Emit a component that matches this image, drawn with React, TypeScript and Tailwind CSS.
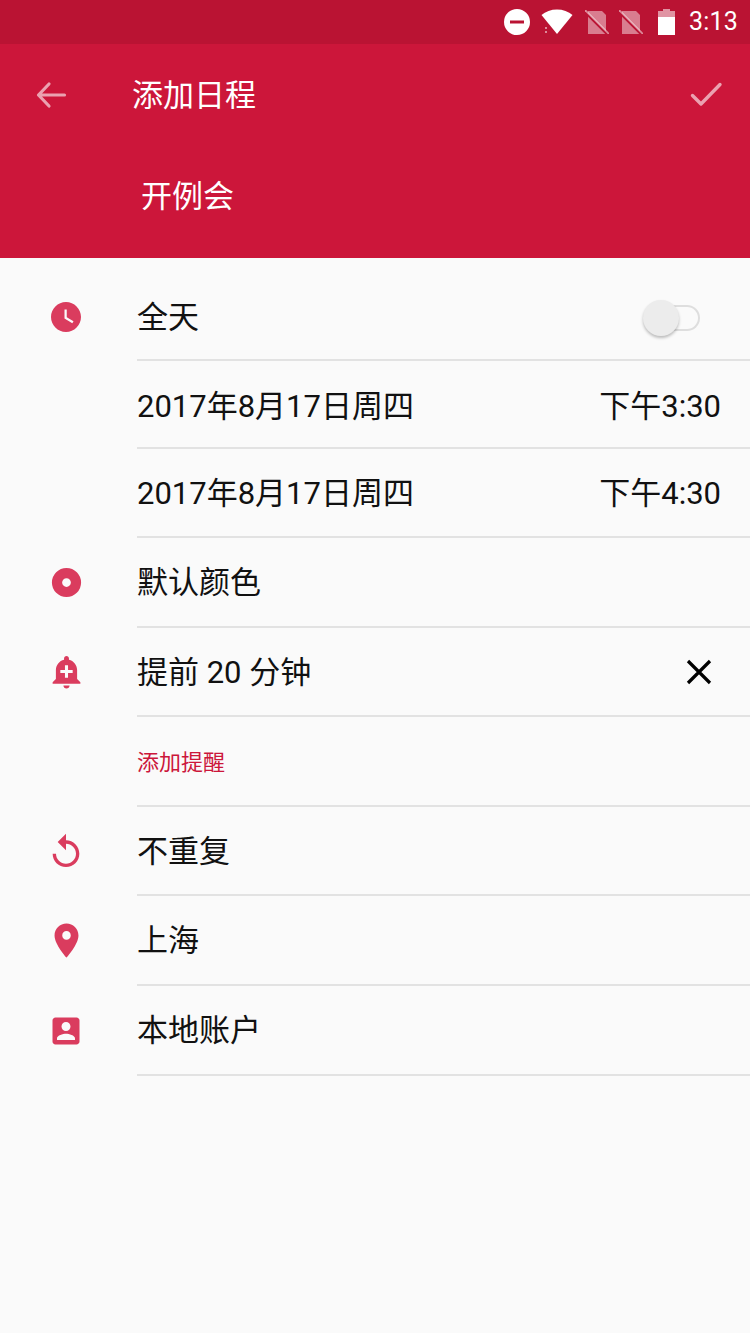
import React from "react";

const font = { fontFamily: '"Roboto","Noto Sans CJK SC",sans-serif' };

function Ic({ d, size = 36 }: { d: string; size?: number }) {
  return (
    <svg width={size} height={size} viewBox="0 0 24 24" fill="#da3c5e" fillRule="evenodd" className="shrink-0">
      <path d={d} />
    </svg>
  );
}

const CLOCK = "M12 2C6.5 2 2 6.5 2 12s4.5 10 10 10 10-4.5 10-10S17.5 2 12 2zm4.2 14.2L11 13V7h1.5v5.2l4.5 2.7-.8 1.3z";
const DOT = "M12 2a10 10 0 1 0 0 20 10 10 0 0 0 0-20zm0 7a3 3 0 1 1 0 6 3 3 0 0 1 0-6z";
const BELL = "M10.01 21.01c0 1.1.89 1.99 1.99 1.99s1.99-.89 1.99-1.99h-3.98zm8.87-4.19V11c0-3.25-2.25-5.97-5.29-6.69v-.72C13.59 2.71 12.88 2 12 2s-1.59.71-1.59 1.59v.72C7.37 5.03 5.12 7.75 5.12 11v5.82L3 18.94V20h18v-1.06l-2.12-2.12zM16 13.01h-3v3h-2v-3H8V11h3V8h2v3h3v2.01z";
const REPLAY = "M12 5V1L7 6l5 5V7c3.31 0 6 2.69 6 6s-2.69 6-6 6-6-2.69-6-6H4c0 4.42 3.58 8 8 8s8-3.58 8-8-3.58-8-8-8z";
const PIN = "M12 2C8.13 2 5 5.13 5 9c0 5.25 7 13 7 13s7-7.75 7-13c0-3.87-3.13-7-7-7zm0 9.5c-1.38 0-2.5-1.12-2.5-2.5s1.12-2.5 2.5-2.5 2.5 1.12 2.5 2.5-1.12 2.5-2.5 2.5z";
const ACCOUNT = "M3 5v14c0 1.1.89 2 2 2h14c1.1 0 2-.9 2-2V5c0-1.1-.9-2-2-2H5c-1.11 0-2 .9-2 2zm12 4c0 1.66-1.34 3-3 3s-3-1.34-3-3 1.34-3 3-3 3 1.34 3 3zm-9 8c0-2 4-3.1 6-3.1s6 1.1 6 3.1v1H6v-1z";

function Row({ icon, size, iconPad = "", textPad = "pt-[3px]", h, children }: { icon?: string; size?: number; iconPad?: string; textPad?: string; h: string; children: React.ReactNode }) {
  return (
    <div className={`flex ${h}`}>
      <div className={`w-[132px] mr-[5px] shrink-0 flex items-center justify-center ${iconPad}`}>{icon ? <Ic d={icon} size={size} /> : null}</div>
      <div className={`flex-1 flex items-center justify-between border-b-2 border-[#e2e2e2] text-[31px] text-[#111111] pr-[29px] ${textPad}`}>
        {children}
      </div>
    </div>
  );
}

function SimOff() {
  return (
    <svg width="24" height="24" viewBox="0 0 24 24">
      <path d="M3 1h14l4 4v19H3z" fill="#fff" fillOpacity="0.45" />
      <path d="M0 2l22 22" stroke="#ba1333" strokeWidth="2.500" />
      <path d="M0 0l24 24" stroke="#fff" strokeOpacity="0.5" strokeWidth="1.800" />
    </svg>
  );
}

export default function App() {
  return (
    <div className="w-[750px] h-[1333px] bg-[#fafafa] flex flex-col overflow-hidden" style={font}>
      <div className="h-[44px] bg-[#ba1333] flex items-center justify-end text-white">
        <svg width="26" height="26" viewBox="0 0 26 26" className="mr-[11px]">
          <path fill="#fff" fillRule="evenodd" d="M13 0a13 13 0 1 0 0 26 13 13 0 0 0 0-26zM6 11.500h14v3H6z" />
        </svg>
        <svg width="32" height="26" viewBox="0 0 32 26" className="mr-[12px]">
          <path fill="#fff" d="M16 25 0.500 6C4.500 2.500 10 0.500 16 0.500S27.500 2.500 31.500 6z" />
          <path fill="#fff" opacity="0.5" d="M4 18h2v2H4zM4 22h2v2H4z" />
        </svg>
        <div className="mr-[10px] flex"><SimOff /></div>
        <div className="mr-[15px] flex"><SimOff /></div>
        <svg width="17" height="26" viewBox="0 0 17 26" className="mr-[14px]">
          <path fill="#fff" opacity="0.55" d="M5 0h7v2h5v6H0V2h5z" />
          <path fill="#fff" d="M0 8h17v18H0z" />
        </svg>
        <span className="text-[25px] mr-[12px] tracking-[0.2px]">3:13</span>
      </div>
      <div className="h-[214px] bg-[#cc163a] text-white flex flex-col">
        <div className="h-[102px] flex items-center pl-[32px] pr-[22px]">
          <svg width="38" height="38" viewBox="0 0 38 38" fill="none" stroke="#fff" strokeOpacity="0.6" strokeWidth="3.200" strokeLinecap="round" strokeLinejoin="round">
            <path d="M6.500 19h26M17 8 6.500 19 17 30" />
          </svg>
          <span className="ml-[62px] pt-[2px] text-[31px] flex-1">添加日程</span>
          <svg width="40" height="40" viewBox="0 0 40 40" fill="none" stroke="#fff" strokeOpacity="0.6" strokeWidth="3.400" strokeLinecap="round" strokeLinejoin="round">
            <path d="M4.500 20.500l8.500 8.500L32 9.500" />
          </svg>
        </div>
        <div className="pl-[141px] pt-[28px] text-[31px] leading-[46px]">开例会</div>
      </div>
      <div className="pt-[13px]">
        <Row icon={CLOCK} iconPad="pt-[2px]" textPad="pt-[7px]" h="h-[90px]">
          <span>全天</span>
          <div className="flex items-center mr-[21px] -mt-[1px]">
            <div className="w-[36px] h-[36px] rounded-full bg-[#ececec] shadow-[0_2px_3px_rgba(0,0,0,0.25)] z-10" />
            <div className="w-[39px] h-[26px] -ml-[18px] rounded-r-full border-2 border-l-0 border-[#dedede]" />
          </div>
        </Row>
        <Row textPad="pt-[7px]" h="h-[88px]"><span>2017年8月17日周四</span><span>下午3:30</span></Row>
        <Row h="h-[89px]"><span>2017年8月17日周四</span><span>下午4:30</span></Row>
        <Row icon={DOT} size={35} iconPad="pb-[2px]" h="h-[90px]"><span>默认颜色</span></Row>
        <Row icon={BELL} size={37} iconPad="pb-[2px]" h="h-[89px]">
          <span>提前 20 分钟</span>
          <svg width="28" height="28" viewBox="0 0 28 28" stroke="#000" strokeWidth="3.200" className="mr-[8px] -mt-[2px]">
            <path d="M3 3l22 22M25 3 3 25" />
          </svg>
        </Row>
        <Row h="h-[90px]"><span className="text-[22px] text-[#cc163a]">添加提醒</span></Row>
        <Row icon={REPLAY} size={40} h="h-[89px]"><span>不重复</span></Row>
        <Row icon={PIN} size={41} iconPad="pb-[2px]" h="h-[90px]"><span>上海</span></Row>
        <Row icon={ACCOUNT} h="h-[90px]"><span>本地账户</span></Row>
      </div>
    </div>
  );
}
